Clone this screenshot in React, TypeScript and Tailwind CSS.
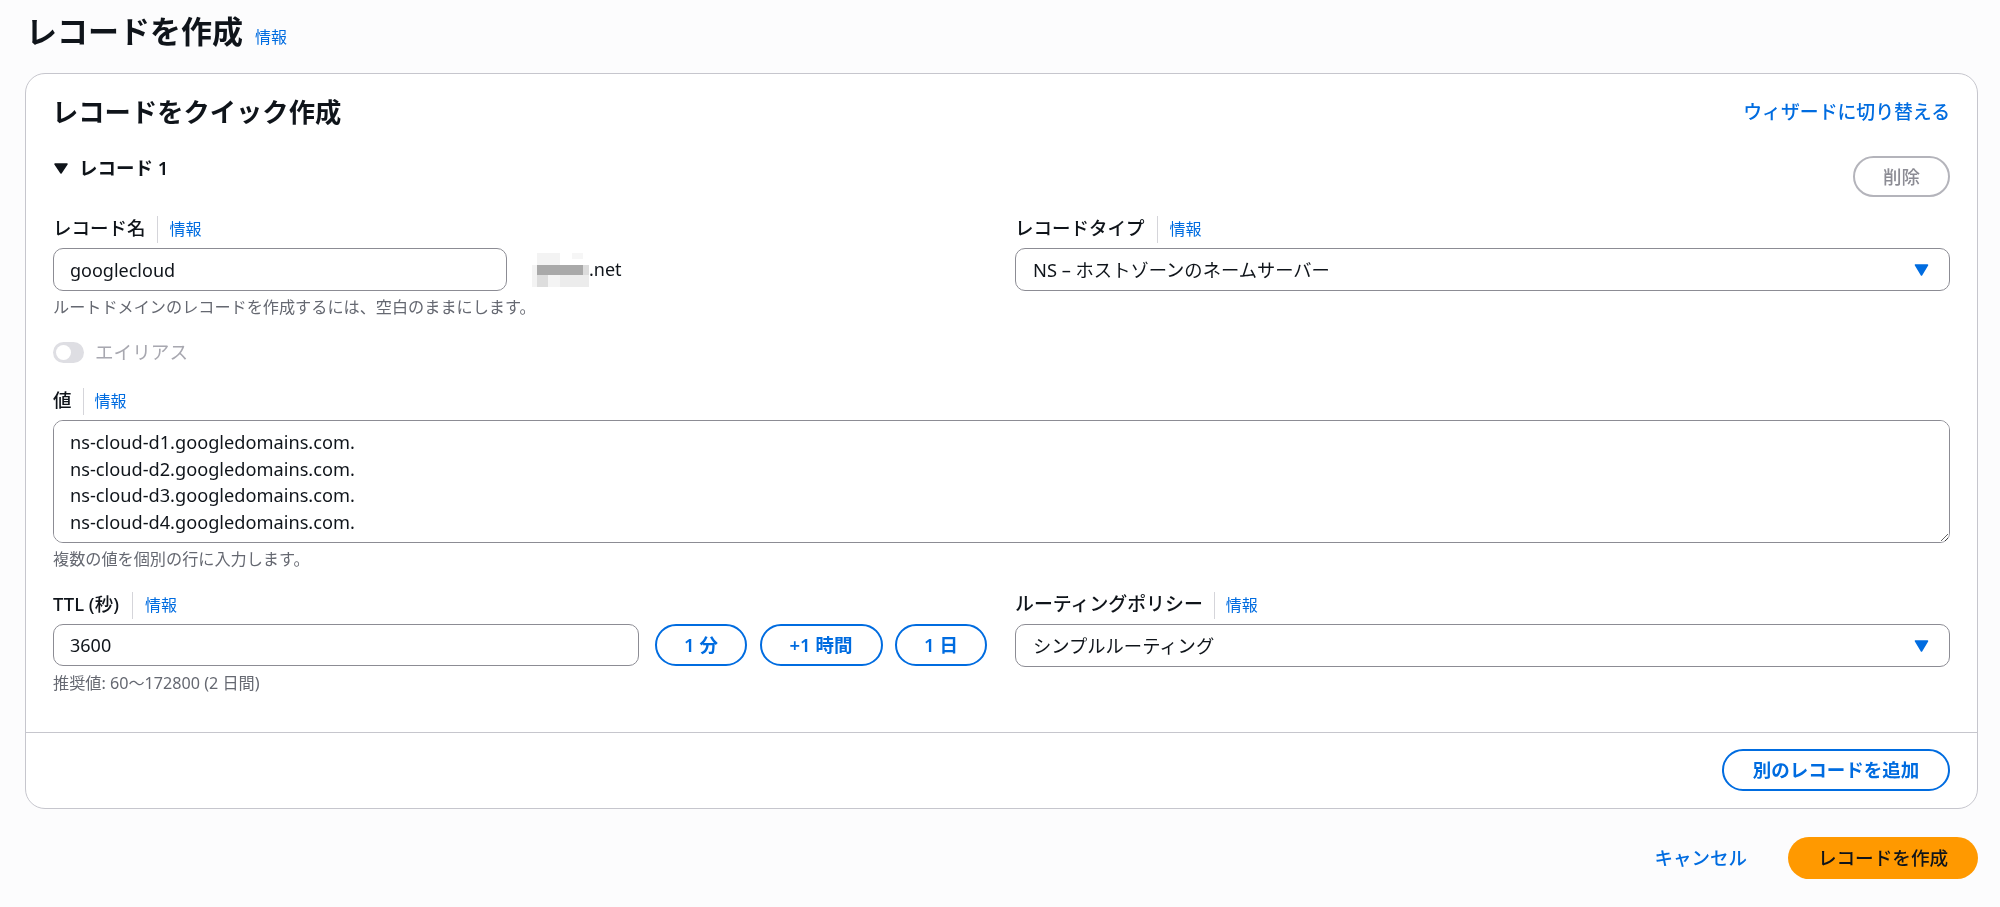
import React from "react";

function InfoLink() {
  return <a className="text-[16px] leading-none text-[#006ce0]">情報</a>;
}

function FieldLabel({ label, size = "text-[18.5px]", gap = "ml-[11px] mr-[12px]" }: { label: string; size?: string; gap?: string }) {
  return (
    <div className="flex h-[27px] items-center">
      <span className={`${size} pb-[2px] font-medium leading-none text-[#0f141a]`}>{label}</span>
      <span className={`${gap} h-[27px] w-px bg-[#d5d5da]`} />
      <span className="pb-[1px] leading-none">
        <InfoLink />
      </span>
    </div>
  );
}

function Hint({ children }: { children: React.ReactNode }) {
  return <div className="h-[20px] text-[16.15px] leading-[20px] text-[#656871]">{children}</div>;
}

function SelectBox({ value }: { value: string }) {
  return (
    <div className="flex h-[43px] items-center justify-between rounded-[10px] border border-[#8c8c94] bg-white pl-[17px] pr-[20px] text-[18.3px] text-[#0f141a]">
      <span>{value}</span>
      <svg width="15" height="12" viewBox="0 0 15 12">
        <path d="M1.5 1h12L7.5 11z" fill="#006ce0" stroke="#006ce0" strokeWidth="1.5" strokeLinejoin="round" />
      </svg>
    </div>
  );
}

function PillButton({ children, width }: { children: React.ReactNode; width: string }) {
  return (
    <button className={`${width} h-[42px] rounded-full border-2 border-[#006ce0] bg-white text-[18.5px] font-semibold text-[#006ce0]`}>
      {children}
    </button>
  );
}

function BlurredDomain() {
  return (
    <svg width="57" height="39" viewBox="0 0 57 39" className="shrink-0">
      <rect x="5" y="3" width="23" height="12" fill="#f3f3f3" />
      <rect x="40" y="3" width="11" height="6" fill="#f6f6f6" />
      <rect x="0" y="15" width="5" height="22" fill="#f3f3f3" />
      <rect x="5" y="15" width="46" height="10" fill="#a9a9a9" />
      <rect x="51" y="15" width="6" height="10" fill="#dcdcdc" />
      <rect x="5" y="25" width="11" height="12" fill="#dddddd" />
      <rect x="16" y="25" width="12" height="12" fill="#f4f4f4" />
      <rect x="28" y="25" width="29" height="12" fill="#ececec" />
    </svg>
  );
}

export default function App() {
  return (
    <div className="min-h-screen bg-[#fcfcfd] pl-[25px] pr-[22px] font-['Noto_Sans','Noto_Sans_CJK_JP',sans-serif] text-[#0f141a]">
      <div className="flex h-[62px] items-center pl-[1px]">
        <h1 className="text-[31px] font-bold leading-none">レコードを作成</h1>
        <span className="ml-[12px] mt-[12px]">
          <InfoLink />
        </span>
      </div>

      <div className="mt-[11px] rounded-[20px] border border-[#c6c6cd] bg-white">
        <div className="px-[27px] pb-[39px] pt-[25px]">
          <div className="flex h-[26px] items-center justify-between">
            <h2 className="-ml-[1px] text-[26.3px] font-bold leading-none">レコードをクイック作成</h2>
            <a className="text-[18.85px] font-medium leading-none text-[#006ce0]">ウィザードに切り替える</a>
          </div>

          <div className="mt-[31px] flex items-start justify-between">
            <div className="flex h-[24px] items-center pl-[1px]">
              <svg width="14" height="11" viewBox="0 0 14 11">
                <path d="M1 1h12L7 10z" fill="#0f141a" stroke="#0f141a" strokeWidth="1.5" strokeLinejoin="round" />
              </svg>
              <span className="ml-[11px] text-[18.5px] font-semibold leading-none">レコード 1</span>
            </div>
            <button className="h-[41px] w-[97px] rounded-full border-2 border-[#b4b4bb] bg-white text-[18.5px] font-medium text-[#8c8c94]">
              削除
            </button>
          </div>

          <div className="mt-[19px] grid grid-cols-2 gap-x-[27px]">
            <div>
              <FieldLabel label="レコード名" />
              <div className="mt-[5px] flex items-center">
                <input
                  readOnly
                  value="googlecloud"
                  className="h-[43px] w-[454px] rounded-[10px] border border-[#8c8c94] bg-white px-[16px] text-[18px] text-[#0f141a] outline-none"
                />
                <div className="ml-[25px] flex items-center">
                  <BlurredDomain />
                  <span className="text-[18px]">.net</span>
                </div>
              </div>
              <div className="mt-[6px]">
                <Hint>ルートドメインのレコードを作成するには、空白のままにします。</Hint>
              </div>
            </div>
            <div>
              <FieldLabel label="レコードタイプ" gap="ml-[12px] mr-[12px]" />
              <div className="mt-[5px]">
                <SelectBox value="NS – ホストゾーンのネームサーバー" />
              </div>
            </div>
          </div>

          <div className="mt-[25px] flex h-[21px] items-center">
            <div className="flex h-[21px] w-[31px] items-center rounded-full bg-[#dedee3] pl-[3px]">
              <div className="h-[15px] w-[15px] rounded-full bg-white" />
            </div>
            <span className="ml-[11px] text-[18.6px] leading-none text-[#a8a8b0]">エイリアス</span>
          </div>

          <div className="mt-[25px]">
            <FieldLabel label="値" gap="ml-[11px] mr-[11px]" />
            <textarea
              readOnly
              value={"ns-cloud-d1.googledomains.com.\nns-cloud-d2.googledomains.com.\nns-cloud-d3.googledomains.com.\nns-cloud-d4.googledomains.com."}
              className="mt-[5px] block h-[123px] w-full rounded-[10px] border border-[#8c8c94] bg-white px-[16px] py-[8px] text-[18.2px] leading-[26.7px] text-[#0f141a] outline-none"
            />
            <div className="mt-[6px]">
              <Hint>複数の値を個別の行に入力します。</Hint>
            </div>
          </div>

          <div className="mt-[23px] grid grid-cols-2 gap-x-[27px]">
            <div>
              <FieldLabel label="TTL (秒)" gap="ml-[13px] mr-[12px]" />
              <div className="mr-[1px] mt-[5px] flex items-center gap-[12.5px]">
                <input
                  readOnly
                  value="3600"
                  className="mr-[4px] h-[42px] min-w-0 flex-1 rounded-[10px] border border-[#8c8c94] bg-white px-[16px] text-[18px] text-[#0f141a] outline-none"
                />
                <PillButton width="w-[92px]">1 分</PillButton>
                <PillButton width="w-[123px]">+1 時間</PillButton>
                <PillButton width="w-[92px]">1 日</PillButton>
              </div>
              <div className="mt-[7px]">
                <Hint>推奨値: 60～172800 (2 日間)</Hint>
              </div>
            </div>
            <div>
              <FieldLabel label="ルーティングポリシー" size="text-[18.9px]" gap="ml-[11px] mr-[11px]" />
              <div className="mt-[5px]">
                <SelectBox value="シンプルルーティング" />
              </div>
            </div>
          </div>
        </div>

        <div className="flex justify-end border-t border-[#c6c6cd] px-[27px] pb-[17px] pt-[16px]">
          <PillButton width="w-[228px]">別のレコードを追加</PillButton>
        </div>
      </div>

      <div className="mt-[28px] flex items-center justify-end">
        <a className="text-[18.5px] font-medium text-[#006ce0]">キャンセル</a>
        <button className="ml-[41px] h-[42px] w-[190px] rounded-full bg-[#ff9900] text-[18.6px] font-medium text-[#0f141a]">
          レコードを作成
        </button>
      </div>
    </div>
  );
}
